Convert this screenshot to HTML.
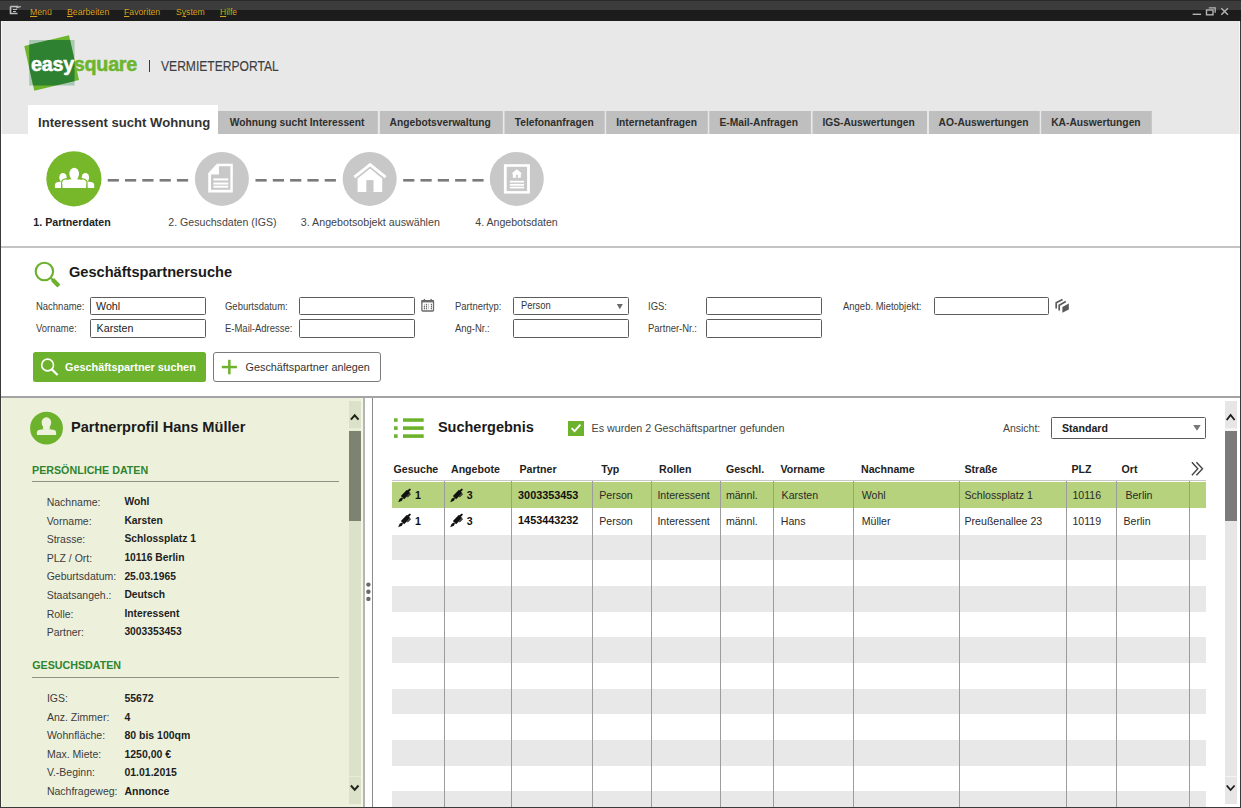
<!DOCTYPE html>
<html><head><meta charset="utf-8">
<style>
*{margin:0;padding:0;box-sizing:border-box}
html,body{width:1241px;height:808px;overflow:hidden}
body{position:relative;background:#e8e8e8;font-family:"Liberation Sans",sans-serif;color:#222}
.a{position:absolute}
.t{position:absolute;white-space:nowrap;line-height:1}
.inp{position:absolute;background:#fff;border:1.5px solid #5c5c5c;border-radius:1.5px}
</style></head><body>
<div class="a" style="left:0px;top:0px;width:1241px;height:10px;background:#3c3c3c;border-top:1px solid #2a2a2a"></div>
<div class="a" style="left:0px;top:10px;width:1241px;height:11px;background:#1c1c1c;"></div>
<div class="a" style="left:0px;top:21px;width:1px;height:787px;background:#3a3a3a;"></div>
<div class="a" style="left:1240px;top:21px;width:1px;height:787px;background:#3a3a3a;"></div>
<div class="a" style="left:1px;top:21px;width:1px;height:786px;background:#f6f6f6;"></div>
<div class="a" style="left:1239px;top:21px;width:1px;height:786px;background:#f6f6f6;"></div>
<div class="a" style="left:1px;top:134px;width:1239px;height:262px;background:#fff;"></div>
<div class="a" style="left:1px;top:246px;width:1239px;height:2px;background:#c4c4c4;"></div>
<div class="a" style="left:1px;top:396.2px;width:1239px;height:1.7px;background:#a4a4a4;"></div>
<div class="a" style="left:2px;top:398px;width:361px;height:409px;background:#edf1dc;"></div>
<div class="a" style="left:363px;top:398px;width:2px;height:409px;background:#b5b5b5;"></div>
<div class="a" style="left:365px;top:398px;width:7px;height:409px;background:#fff;"></div>
<div class="a" style="left:372px;top:398px;width:1px;height:409px;background:#8a8a8a;"></div>
<div class="a" style="left:373px;top:398px;width:867px;height:409px;background:#fff;"></div>
<div class="a" style="left:0px;top:807px;width:1241px;height:1px;background:#3a3a3a;"></div>
<svg class="a" style="left:9px;top:4px" width="14" height="12" viewBox="0 0 14 12"><path d="M1.5 2.5h8M1.5 2.5v7h7" stroke="#bdbdbd" stroke-width="1.6" fill="none"/><path d="M4 5.5h4M4 7.5h3M7 4l5-1.5" stroke="#bdbdbd" stroke-width="1.2" fill="none"/></svg>
<div class="t" style="left:29.50px;top:7.47px;font-size:9.6px;color:#d8a21c;transform-origin:0 0;transform:scaleX(0.9048);"><u>M</u>enü</div>
<div class="t" style="left:66.50px;top:7.47px;font-size:9.6px;color:#d8a21c;transform-origin:0 0;transform:scaleX(0.91);"><u>B</u>earbeiten</div>
<div class="t" style="left:124.00px;top:7.47px;font-size:9.6px;color:#d8a21c;transform-origin:0 0;transform:scaleX(0.9048);"><u>F</u>avoriten</div>
<div class="t" style="left:175.50px;top:7.47px;font-size:9.6px;color:#d8a21c;transform-origin:0 0;transform:scaleX(0.8996000000000001);">S<u>y</u>stem</div>
<div class="t" style="left:219.50px;top:7.47px;font-size:9.6px;color:#d8a21c;transform-origin:0 0;transform:scaleX(0.884);"><u>H</u>ilfe</div>
<svg class="a" style="left:1190px;top:5px" width="42" height="12" viewBox="0 0 42 12"><path d="M2.6 9.3h8.5" stroke="#b4b4b4" stroke-width="1.4"/><rect x="16.5" y="5" width="6.5" height="4.8" stroke="#b4b4b4" stroke-width="1.4" fill="none"/><path d="M18.8 2.8h6.4v5" stroke="#b4b4b4" stroke-width="1.3" fill="none"/><path d="M31.3 3.2l6.6 6.6M37.9 3.2l-6.6 6.6" stroke="#b4b4b4" stroke-width="1.4"/></svg>
<svg class="a" style="left:20px;top:30px" width="70" height="66" viewBox="0 0 70 66">
 <defs><clipPath id="gc"><rect x="9.2" y="10" width="45.4" height="45.5"/></clipPath></defs>
 <rect x="9.2" y="10" width="45.4" height="45.5" fill="#a9c8b4"/>
 <polygon points="4.3,16 49,5.2 59,50 14.3,60.7" fill="#6db52c"/>
 <polygon points="4.3,16 49,5.2 59,50 14.3,60.7" fill="#2f8132" clip-path="url(#gc)"/>
</svg>
<div class="t" style="left:30.50px;top:54.05px;font-size:20.5px;color:#222;font-weight:bold;transform-origin:0 0;transform:scaleX(0.965);letter-spacing:-0.3px;"><span style="color:#fff;-webkit-text-stroke:0.5px #fff">easy</span><span style="color:#6db52c;-webkit-text-stroke:0.5px #6db52c">square</span></div>
<div class="a" style="left:149.2px;top:59.5px;width:1.3px;height:12px;background:#3a3a3a;"></div>
<div class="t" style="left:160.80px;top:58.20px;font-size:15px;color:#3e3e3e;transform-origin:0 0;transform:scaleX(0.806);-webkit-text-stroke:0.15px #3e3e3e;">VERMIETERPORTAL</div>
<div class="a" style="left:27.5px;top:105px;width:190.5px;height:29px;background:#fff;"></div>
<div class="t" style="left:38.00px;top:115.51px;font-size:13.1px;color:#333;font-weight:bold;">Interessent sucht Wohnung</div>
<svg class="a" style="left:0;top:100px" width="1241" height="40" viewBox="0 100 1241 40"><rect x="218" y="111" width="159.8" height="23" fill="#bfbfbf"/><rect x="379.9" y="111" width="122.9" height="23" fill="#bfbfbf"/><rect x="504.5" y="111" width="100.2" height="23" fill="#bfbfbf"/><rect x="606.1" y="111" width="101.7" height="23" fill="#bfbfbf"/><rect x="709.3" y="111" width="101.6" height="23" fill="#bfbfbf"/><rect x="812.6" y="111" width="114.4" height="23" fill="#bfbfbf"/><rect x="929" y="111" width="110.7" height="23" fill="#bfbfbf"/><rect x="1041.2" y="111" width="110.6" height="23" fill="#bfbfbf"/></svg>
<div class="t" style="left:229.70px;top:117.62px;font-size:10.25px;color:#2e2e2e;font-weight:bold;">Wohnung sucht Interessent</div>
<div class="t" style="left:389.50px;top:117.62px;font-size:10.25px;color:#2e2e2e;font-weight:bold;">Angebotsverwaltung</div>
<div class="t" style="left:514.70px;top:117.62px;font-size:10.25px;color:#2e2e2e;font-weight:bold;">Telefonanfragen</div>
<div class="t" style="left:616.20px;top:117.62px;font-size:10.25px;color:#2e2e2e;font-weight:bold;">Internetanfragen</div>
<div class="t" style="left:719.40px;top:117.62px;font-size:10.25px;color:#2e2e2e;font-weight:bold;">E-Mail-Anfragen</div>
<div class="t" style="left:822.40px;top:117.62px;font-size:10.25px;color:#2e2e2e;font-weight:bold;">IGS-Auswertungen</div>
<div class="t" style="left:938.60px;top:117.62px;font-size:10.25px;color:#2e2e2e;font-weight:bold;">AO-Auswertungen</div>
<div class="t" style="left:1051.20px;top:117.62px;font-size:10.25px;color:#2e2e2e;font-weight:bold;">KA-Auswertungen</div>
<svg class="a" style="left:0;top:140px" width="600" height="80" viewBox="0 140 600 80">
 <circle cx="73.9" cy="178.8" r="27.6" fill="#76b82a"/>
 <circle cx="221.9" cy="178.9" r="27" fill="#c8c8c8"/>
 <circle cx="369.7" cy="178.9" r="27" fill="#c8c8c8"/>
 <circle cx="516.8" cy="178.9" r="27" fill="#c8c8c8"/>
 <g fill="#7a7a7a">
<rect x="107.7" y="179" width="11.2" height="2.6"/><rect x="125.0" y="179" width="11.2" height="2.6"/><rect x="142.3" y="179" width="11.2" height="2.6"/><rect x="159.6" y="179" width="11.2" height="2.6"/><rect x="176.9" y="179" width="11.2" height="2.6"/><rect x="255.5" y="179" width="11.2" height="2.6"/><rect x="272.8" y="179" width="11.2" height="2.6"/><rect x="290.1" y="179" width="11.2" height="2.6"/><rect x="307.4" y="179" width="11.2" height="2.6"/><rect x="324.7" y="179" width="11.2" height="2.6"/><rect x="403.2" y="179" width="11.2" height="2.6"/><rect x="420.5" y="179" width="11.2" height="2.6"/><rect x="437.8" y="179" width="11.2" height="2.6"/><rect x="455.1" y="179" width="11.2" height="2.6"/><rect x="472.4" y="179" width="11.2" height="2.6"/></g>
 <g fill="#fff">
  <ellipse cx="74.2" cy="174" rx="4.8" ry="6.3"/>
  <path d="M62.3 188 v-5 q0-2.8 3.5-3.2 l5.5-0.5 h6 l5.5 0.5 q3.5 0.4 3.5 3.2 v5z"/>
  <ellipse cx="63" cy="177.6" rx="3.7" ry="4.7"/>
  <path d="M54.9 188 v-3 q0-2.5 3-3 l4.5-0.5 h5 l-3 1.5 q-2.5 1.3-2.5 3.5 v1.5z"/>
  <ellipse cx="85.4" cy="177.6" rx="3.7" ry="4.7"/>
  <path d="M94.2 188 v-3 q0-2.5-3-3 l-4.5-0.5 h-5 l3 1.5 q2.5 1.3 2.5 3.5 v1.5z"/>
 </g>
 <g stroke="#76b82a" stroke-width="1.2" fill="none">
  <path d="M61.6 188 v-5.2 q0-3.4 4.2-3.9 l4.5-0.6"/><path d="M87 188 v-5.2 q0-3.4-4.2-3.9 l-4.5-0.6"/>
 </g>
 <g transform="translate(194,151)">
  <polygon points="14.2,22.2 22.9,12.8 38.8,12.8 38.8,41.6 14.2,41.6" fill="#fff"/>
  <polygon points="25,15.2 36.4,15.2 36.4,38.8 17,38.8 17,23.6 25,23.6" fill="#c8c8c8"/>
  <g fill="#fff"><rect x="19.4" y="27.4" width="14.9" height="2.1"/><rect x="19.4" y="31.5" width="14.9" height="2.1"/><rect x="19.4" y="34.7" width="14.9" height="2"/></g>
 </g>
 <g transform="translate(342,151)">
  <polyline points="12.3,26.2 28.1,13.6 43.6,26.2" stroke="#fff" stroke-width="2.8" fill="none"/>
  <polygon points="15.6,27.6 28.1,17.6 40.2,27.6 40.2,40.9 15.6,40.9" fill="#fff"/>
  <rect x="24.3" y="29.1" width="7.2" height="11.8" fill="#c8c8c8"/>
 </g>
 <g transform="translate(489,151)">
  <rect x="14.9" y="13.2" width="26" height="29.4" fill="#fff"/>
  <rect x="17.7" y="15.8" width="20.4" height="24.3" fill="#c8c8c8"/>
  <polygon points="22.6,22.6 27.8,18.3 33,22.6 31.8,22.6 31.8,26.7 23.8,26.7 23.8,22.6" fill="#fff"/>
  <rect x="27" y="23.8" width="1.8" height="2.9" fill="#c8c8c8"/>
  <g fill="#fff"><rect x="20.8" y="29.8" width="14.2" height="1.7"/><rect x="20.8" y="32.9" width="14.2" height="1.8"/><rect x="20.8" y="35.7" width="14.2" height="1.7"/></g>
 </g>
</svg>
<div class="t" style="left:33.30px;top:216.88px;font-size:10.65px;color:#222;font-weight:bold;">1. Partnerdaten</div>
<div class="t" style="left:168.30px;top:216.93px;font-size:10.6px;color:#444;">2. Gesuchsdaten (IGS)</div>
<div class="t" style="left:300.80px;top:216.84px;font-size:10.7px;color:#444;">3. Angebotsobjekt auswählen</div>
<div class="t" style="left:475.30px;top:216.93px;font-size:10.6px;color:#444;">4. Angebotsdaten</div>
<svg class="a" style="left:30px;top:256px" width="34" height="34" viewBox="30 256 34 34">
 <circle cx="44.4" cy="271.5" r="8.7" stroke="#6cb02c" stroke-width="2.1" fill="none"/>
 <path d="M50.6 277.7 L58.8 285.9" stroke="#6cb02c" stroke-width="2"/>
 <path d="M52.5 279.6 L58.8 285.9" stroke="#6cb02c" stroke-width="4.3"/>
</svg>
<div class="t" style="left:69.00px;top:264.84px;font-size:14.6px;color:#1a1a1a;font-weight:bold;">Geschäftspartnersuche</div>
<div class="t" style="left:35.70px;top:301.57px;font-size:10.2px;color:#3c3c3c;transform-origin:0 0;transform:scaleX(0.93);">Nachname:</div>
<div class="t" style="left:35.70px;top:323.57px;font-size:10.2px;color:#3c3c3c;transform-origin:0 0;transform:scaleX(0.93);">Vorname:</div>
<div class="inp" style="left:90px;top:296.5px;width:115.7px;height:18.5px"></div>
<div class="inp" style="left:90px;top:319px;width:115.7px;height:18.5px"></div>
<div class="t" style="left:96.00px;top:300.94px;font-size:10.7px;color:#222;">Wohl</div>
<div class="t" style="left:96.60px;top:322.54px;font-size:10.7px;color:#222;">Karsten</div>
<div class="t" style="left:224.60px;top:301.57px;font-size:10.2px;color:#3c3c3c;transform-origin:0 0;transform:scaleX(0.93);">Geburtsdatum:</div>
<div class="t" style="left:224.60px;top:323.57px;font-size:10.2px;color:#3c3c3c;transform-origin:0 0;transform:scaleX(0.93);">E-Mail-Adresse:</div>
<div class="inp" style="left:299.3px;top:296.5px;width:115.5px;height:18.5px"></div>
<div class="inp" style="left:299.3px;top:319px;width:115.5px;height:18.5px"></div>
<svg class="a" style="left:420px;top:298px" width="16" height="15" viewBox="420 298 16 15">
 <rect x="421.9" y="300.7" width="11.6" height="10.3" rx="0.8" stroke="#6a6a6a" stroke-width="1.3" fill="#fff"/>
 <rect x="421.4" y="300.1" width="12.6" height="2.3" fill="#6a6a6a"/>
 <rect x="423.7" y="298.9" width="1.4" height="2" fill="#6a6a6a"/><rect x="430.4" y="298.9" width="1.4" height="2" fill="#6a6a6a"/>
 <g fill="#b8b8b8"><rect x="424" y="303.8" width="0.8" height="5.6"/><rect x="426.1" y="303.8" width="0.8" height="5.6"/><rect x="428.3" y="303.8" width="0.8" height="5.6"/><rect x="431" y="303.8" width="0.8" height="5.6"/></g>
 <g fill="#666"><rect x="425.9" y="303.9" width="1.2" height="1.2"/><rect x="430.8" y="303.9" width="1.2" height="1.2"/>
 <rect x="423.8" y="306" width="1.2" height="1.2"/><rect x="425.9" y="306" width="1.2" height="1.2"/><rect x="430.8" y="306" width="1.2" height="1.2"/>
 <rect x="423.8" y="308" width="1.2" height="1.2"/><rect x="425.9" y="308" width="1.2" height="1.2"/><rect x="430.8" y="308" width="1.2" height="1.2"/></g>
</svg>
<div class="t" style="left:455.40px;top:301.57px;font-size:10.2px;color:#3c3c3c;transform-origin:0 0;transform:scaleX(0.93);">Partnertyp:</div>
<div class="t" style="left:455.40px;top:323.57px;font-size:10.2px;color:#3c3c3c;transform-origin:0 0;transform:scaleX(0.93);">Ang-Nr.:</div>
<div class="inp" style="left:513px;top:296.5px;width:115.5px;height:18.5px"></div>
<div class="inp" style="left:513px;top:319px;width:115.5px;height:18.5px"></div>
<div class="t" style="left:521.20px;top:301.05px;font-size:10.1px;color:#333;transform-origin:0 0;transform:scaleX(0.93);">Person</div>
<svg class="a" style="left:615px;top:303px" width="10" height="8" viewBox="0 0 10 8"><polygon points="1.8,1 7.8,1 4.8,6.2" fill="#6a6a6a"/></svg>
<div class="t" style="left:647.70px;top:301.57px;font-size:10.2px;color:#3c3c3c;transform-origin:0 0;transform:scaleX(0.93);">IGS:</div>
<div class="t" style="left:647.70px;top:323.57px;font-size:10.2px;color:#3c3c3c;transform-origin:0 0;transform:scaleX(0.93);">Partner-Nr.:</div>
<div class="inp" style="left:706.3px;top:296.5px;width:115.6px;height:18.5px"></div>
<div class="inp" style="left:706.3px;top:319px;width:115.6px;height:18.5px"></div>
<div class="t" style="left:843.00px;top:301.57px;font-size:10.2px;color:#3c3c3c;transform-origin:0 0;transform:scaleX(0.93);">Angeb. Mietobjekt:</div>
<div class="inp" style="left:933.7px;top:296.6px;width:115.2px;height:18px"></div>
<svg class="a" style="left:1050px;top:294px" width="24" height="24" viewBox="0 0 24 24">
 <polyline points="6.2,14.5 6.2,8.8 12.6,5.4" stroke="#5a5a5a" stroke-width="1.7" fill="none"/>
 <polyline points="9.2,16.6 9.2,11.2 15.8,7.6" stroke="#5a5a5a" stroke-width="1.7" fill="none"/>
 <polygon points="12.4,12.9 18.8,9.6 18.8,15.4 12.4,18.8" fill="#5a5a5a"/>
</svg>
<div class="a" style="left:33.4px;top:352px;width:173px;height:29.6px;background:#6db22c;border-radius:2.5px;"></div>
<svg class="a" style="left:38px;top:355px" width="24" height="24" viewBox="38 355 24 24">
 <circle cx="47.6" cy="365" r="5.9" stroke="#fff" stroke-width="1.6" fill="none"/>
 <path d="M51.8 369.4 L57.6 375" stroke="#fff" stroke-width="2.2"/>
</svg>
<div class="t" style="left:65.00px;top:361.92px;font-size:10.85px;color:#fff;font-weight:bold;">Geschäftspartner suchen</div>
<div class="a" style="left:213.4px;top:352px;width:167.4px;height:29.5px;background:#fff;border:1px solid #7a7a7a;border-radius:3px;"></div>
<svg class="a" style="left:220px;top:358px" width="18" height="18" viewBox="220 358 18 18">
 <rect x="221.8" y="365.8" width="15.1" height="2.5" fill="#6db22c"/>
 <rect x="228.1" y="359.8" width="2.5" height="14.5" fill="#6db22c"/>
</svg>
<div class="t" style="left:245.60px;top:361.96px;font-size:10.8px;color:#333;">Geschäftspartner anlegen</div>
<svg class="a" style="left:28px;top:410px" width="38" height="38" viewBox="28 410 38 38">
 <circle cx="46.5" cy="428.2" r="16.4" fill="#6db22c"/>
 <ellipse cx="46.4" cy="422.6" rx="4.8" ry="5.4" fill="#eef2dc"/>
 <path d="M43.2 426.5 h6.4 l0.3 2.6 h-7z" fill="#eef2dc"/>
 <path d="M36.9 435.1 v-2.6 q0-2.4 3.2-2.7 l4.5-0.7 h3.8 l4.5 0.7 q3.2 0.3 3.2 2.7 v2.6z" fill="#eef2dc"/>
</svg>
<div class="t" style="left:71.00px;top:419.54px;font-size:14.6px;color:#1a1a1a;font-weight:bold;">Partnerprofil Hans Müller</div>
<div class="t" style="left:32.00px;top:464.74px;font-size:10.7px;color:#2f852f;font-weight:bold;">PERSÖNLICHE DATEN</div>
<div class="a" style="left:32px;top:480.6px;width:307px;height:1.2px;background:#8f9185;"></div>
<div class="t" style="left:32.20px;top:660.44px;font-size:10.7px;color:#2f852f;font-weight:bold;">GESUCHSDATEN</div>
<div class="a" style="left:32.2px;top:676.6px;width:307px;height:1.2px;background:#8f9185;"></div>
<div class="t" style="left:46.70px;top:497.01px;font-size:10.5px;color:#3c3c3c;">Nachname:</div>
<div class="t" style="left:124.40px;top:497.18px;font-size:10.3px;color:#1e1e1e;font-weight:bold;">Wohl</div>
<div class="t" style="left:46.70px;top:515.61px;font-size:10.5px;color:#3c3c3c;">Vorname:</div>
<div class="t" style="left:124.40px;top:515.78px;font-size:10.3px;color:#1e1e1e;font-weight:bold;">Karsten</div>
<div class="t" style="left:46.70px;top:534.21px;font-size:10.5px;color:#3c3c3c;">Strasse:</div>
<div class="t" style="left:124.40px;top:534.38px;font-size:10.3px;color:#1e1e1e;font-weight:bold;">Schlossplatz 1</div>
<div class="t" style="left:46.70px;top:552.81px;font-size:10.5px;color:#3c3c3c;">PLZ / Ort:</div>
<div class="t" style="left:124.40px;top:552.98px;font-size:10.3px;color:#1e1e1e;font-weight:bold;">10116 Berlin</div>
<div class="t" style="left:46.70px;top:571.41px;font-size:10.5px;color:#3c3c3c;">Geburtsdatum:</div>
<div class="t" style="left:124.40px;top:571.58px;font-size:10.3px;color:#1e1e1e;font-weight:bold;">25.03.1965</div>
<div class="t" style="left:46.70px;top:590.01px;font-size:10.5px;color:#3c3c3c;">Staatsangeh.:</div>
<div class="t" style="left:124.40px;top:590.18px;font-size:10.3px;color:#1e1e1e;font-weight:bold;">Deutsch</div>
<div class="t" style="left:46.70px;top:608.61px;font-size:10.5px;color:#3c3c3c;">Rolle:</div>
<div class="t" style="left:124.40px;top:608.78px;font-size:10.3px;color:#1e1e1e;font-weight:bold;">Interessent</div>
<div class="t" style="left:46.70px;top:627.21px;font-size:10.5px;color:#3c3c3c;">Partner:</div>
<div class="t" style="left:124.40px;top:627.38px;font-size:10.3px;color:#1e1e1e;font-weight:bold;">3003353453</div>
<div class="t" style="left:46.90px;top:693.01px;font-size:10.5px;color:#3c3c3c;">IGS:</div>
<div class="t" style="left:124.40px;top:693.01px;font-size:10.5px;color:#1e1e1e;font-weight:bold;">55672</div>
<div class="t" style="left:46.90px;top:711.59px;font-size:10.5px;color:#3c3c3c;">Anz. Zimmer:</div>
<div class="t" style="left:124.40px;top:711.59px;font-size:10.5px;color:#1e1e1e;font-weight:bold;">4</div>
<div class="t" style="left:46.90px;top:730.17px;font-size:10.5px;color:#3c3c3c;">Wohnfläche:</div>
<div class="t" style="left:124.40px;top:730.17px;font-size:10.5px;color:#1e1e1e;font-weight:bold;">80 bis 100qm</div>
<div class="t" style="left:46.90px;top:748.75px;font-size:10.5px;color:#3c3c3c;">Max. Miete:</div>
<div class="t" style="left:124.40px;top:748.75px;font-size:10.5px;color:#1e1e1e;font-weight:bold;">1250,00 €</div>
<div class="t" style="left:46.90px;top:767.33px;font-size:10.5px;color:#3c3c3c;">V.-Beginn:</div>
<div class="t" style="left:124.40px;top:767.33px;font-size:10.5px;color:#1e1e1e;font-weight:bold;">01.01.2015</div>
<div class="t" style="left:46.90px;top:785.91px;font-size:10.5px;color:#3c3c3c;">Nachfrageweg:</div>
<div class="t" style="left:124.40px;top:785.91px;font-size:10.5px;color:#1e1e1e;font-weight:bold;">Annonce</div>
<div class="a" style="left:348.5px;top:400.5px;width:12.5px;height:403px;background:#dbe2c9;"></div>
<div class="a" style="left:348.5px;top:428px;width:12.5px;height:2.8px;background:#e8eed6;"></div>
<div class="a" style="left:348.5px;top:775.5px;width:12.5px;height:1.2px;background:#e8eed6;"></div>
<div class="a" style="left:361px;top:398px;width:2px;height:409px;background:#f2f6e2;"></div>
<div class="a" style="left:348.5px;top:430.8px;width:12.3px;height:90px;background:#7d8370;"></div>
<svg class="a" style="left:348px;top:410px" width="14" height="14" viewBox="348 410 14 14"><polyline points="350.9,419.6 354.7,415.3 358.5,419.6" stroke="#1e2218" stroke-width="2" fill="none"/></svg>
<svg class="a" style="left:348px;top:781px" width="14" height="14" viewBox="348 781 14 14"><polyline points="350.9,785.5 354.7,789.8 358.5,785.5" stroke="#1e2218" stroke-width="2" fill="none"/></svg>
<svg class="a" style="left:365px;top:581px" width="7" height="22" viewBox="365 581 7 22"><g fill="#6a6a6a"><circle cx="368.4" cy="584.6" r="2.2"/><circle cx="368.4" cy="591.7" r="2.2"/><circle cx="368.4" cy="598.9" r="2.2"/></g></svg>
<svg class="a" style="left:390px;top:414px" width="36" height="28" viewBox="390 414 36 28"><g fill="#6db22c">
<rect x="394" y="418.3" width="3.6" height="3.5"/><rect x="403" y="418.3" width="20.7" height="3.5"/>
<rect x="394" y="426.3" width="3.6" height="3.6"/><rect x="403" y="426.3" width="20.7" height="3.6"/>
<rect x="394" y="434.3" width="3.6" height="3.6"/><rect x="403" y="434.3" width="20.7" height="3.6"/></g></svg>
<div class="t" style="left:437.90px;top:420.43px;font-size:14.5px;color:#1a1a1a;font-weight:bold;">Suchergebnis</div>
<div class="a" style="left:568.1px;top:420.6px;width:15.6px;height:15.2px;background:#6db22c;"></div>
<svg class="a" style="left:568px;top:420px" width="16" height="16" viewBox="0 0 16 16"><polyline points="3.6,8.2 6.6,11.2 12.4,4.6" stroke="#fff" stroke-width="1.8" fill="none"/></svg>
<div class="t" style="left:591.50px;top:422.60px;font-size:10.75px;color:#444;">Es wurden 2 Geschäftspartner gefunden</div>
<div class="t" style="left:1002.90px;top:422.91px;font-size:10.5px;color:#444;">Ansicht:</div>
<div class="inp" style="left:1050.8px;top:417.2px;width:155.6px;height:21.6px"></div>
<div class="t" style="left:1062.00px;top:423.03px;font-size:10.6px;color:#222;font-weight:bold;">Standard</div>
<svg class="a" style="left:1191px;top:423px" width="12" height="10" viewBox="1191 423 12 10"><polygon points="1193.2,424.9 1200.7,424.9 1197,430.8" fill="#777"/></svg>
<div class="a" style="left:1224.5px;top:400.5px;width:12.3px;height:403px;background:#e6e6e6;"></div>
<div class="a" style="left:1224.5px;top:428.3px;width:12.3px;height:2.6px;background:#f4f4f4;"></div>
<div class="a" style="left:1224.5px;top:775.5px;width:12.3px;height:1.2px;background:#f4f4f4;"></div>
<div class="a" style="left:1224.5px;top:431px;width:12.3px;height:90px;background:#7b7b7b;"></div>
<svg class="a" style="left:1224px;top:410px" width="14" height="14" viewBox="1224 410 14 14"><polyline points="1226.7,420 1230.6,415 1234.6,420" stroke="#1a1a1a" stroke-width="1.8" fill="none"/></svg>
<svg class="a" style="left:1224px;top:781px" width="14" height="14" viewBox="1224 781 14 14"><polyline points="1226.7,785.5 1230.6,790 1234.6,785.5" stroke="#1a1a1a" stroke-width="1.8" fill="none"/></svg>
<div class="t" style="left:393.50px;top:463.53px;font-size:10.6px;color:#222;font-weight:bold;">Gesuche</div>
<div class="t" style="left:451.00px;top:463.53px;font-size:10.6px;color:#222;font-weight:bold;">Angebote</div>
<div class="t" style="left:519.50px;top:463.53px;font-size:10.6px;color:#222;font-weight:bold;">Partner</div>
<div class="t" style="left:601.30px;top:463.53px;font-size:10.6px;color:#222;font-weight:bold;">Typ</div>
<div class="t" style="left:659.10px;top:463.53px;font-size:10.6px;color:#222;font-weight:bold;">Rollen</div>
<div class="t" style="left:725.90px;top:463.53px;font-size:10.6px;color:#222;font-weight:bold;">Geschl.</div>
<div class="t" style="left:780.40px;top:463.53px;font-size:10.6px;color:#222;font-weight:bold;">Vorname</div>
<div class="t" style="left:861.00px;top:463.53px;font-size:10.6px;color:#222;font-weight:bold;">Nachname</div>
<div class="t" style="left:964.50px;top:463.53px;font-size:10.6px;color:#222;font-weight:bold;">Straße</div>
<div class="t" style="left:1071.50px;top:463.53px;font-size:10.6px;color:#222;font-weight:bold;">PLZ</div>
<div class="t" style="left:1121.60px;top:463.53px;font-size:10.6px;color:#222;font-weight:bold;">Ort</div>
<svg class="a" style="left:1188px;top:460px" width="18" height="18" viewBox="1188 460 18 18"><polyline points="1191.9,462.2 1197.8,468.7 1191.9,475.2" stroke="#454545" stroke-width="1.4" fill="none"/><polyline points="1196.4,462.2 1202.5,468.7 1196.4,475.2" stroke="#454545" stroke-width="1.4" fill="none"/></svg>
<div class="a" style="left:392px;top:479.5px;width:814.3px;height:1.6px;background:#c8c8c8;"></div>
<div class="a" style="left:392px;top:482px;width:814.3px;height:26px;background:#b6d27c;"></div>
<div class="a" style="left:392px;top:534.6px;width:814.3px;height:25.7px;background:#e8e8e8;"></div>
<div class="a" style="left:392px;top:585.9px;width:814.3px;height:25.7px;background:#e8e8e8;"></div>
<div class="a" style="left:392px;top:637.2px;width:814.3px;height:25.7px;background:#e8e8e8;"></div>
<div class="a" style="left:392px;top:688.6px;width:814.3px;height:25.7px;background:#e8e8e8;"></div>
<div class="a" style="left:392px;top:739.9px;width:814.3px;height:25.7px;background:#e8e8e8;"></div>
<div class="a" style="left:392px;top:791.2px;width:814.3px;height:15.8px;background:#e8e8e8;"></div>
<div class="a" style="left:443.8px;top:481.2px;width:1.1px;height:326px;background:#9c9c9c;"></div>
<div class="a" style="left:510.8px;top:481.2px;width:1.1px;height:326px;background:#9c9c9c;"></div>
<div class="a" style="left:592.2px;top:481.2px;width:1.1px;height:326px;background:#9c9c9c;"></div>
<div class="a" style="left:651px;top:481.2px;width:1.1px;height:326px;background:#9c9c9c;"></div>
<div class="a" style="left:720.2px;top:481.2px;width:1.1px;height:326px;background:#9c9c9c;"></div>
<div class="a" style="left:773.3px;top:481.2px;width:1.1px;height:326px;background:#9c9c9c;"></div>
<div class="a" style="left:853px;top:481.2px;width:1.1px;height:326px;background:#9c9c9c;"></div>
<div class="a" style="left:959.4px;top:481.2px;width:1.1px;height:326px;background:#9c9c9c;"></div>
<div class="a" style="left:1066.1px;top:481.2px;width:1.1px;height:326px;background:#9c9c9c;"></div>
<div class="a" style="left:1116.1px;top:481.2px;width:1.1px;height:326px;background:#9c9c9c;"></div>
<div class="a" style="left:1188.8px;top:481.2px;width:1.1px;height:326px;background:#9c9c9c;"></div>
<svg class="a" style="left:392px;top:483.7px" width="22" height="22" viewBox="0 0 22 22"><g transform="translate(1.6,0.2) scale(0.92)"><path d="M9.7 14.5 L16.3 7.9" stroke="#111" stroke-width="5"/><path d="M16 7.4 L17.6 5.9" stroke="#111" stroke-width="2.2" stroke-linecap="round"/><path d="M5 19.6 L6.6 15.8 L9 14.4 L10.2 15.6 L9 18 Z" fill="#111"/><path d="M14.9 13.9 L18.5 10.4" stroke="#333" stroke-width="1.3"/></g></svg>
<div class="t" style="left:414.90px;top:490.23px;font-size:10.6px;color:#111;font-weight:bold;">1</div>
<svg class="a" style="left:444px;top:483.7px" width="22" height="22" viewBox="0 0 22 22"><g transform="translate(1.6,0.2) scale(0.92)"><path d="M9.7 14.5 L16.3 7.9" stroke="#111" stroke-width="5"/><path d="M16 7.4 L17.6 5.9" stroke="#111" stroke-width="2.2" stroke-linecap="round"/><path d="M5 19.6 L6.6 15.8 L9 14.4 L10.2 15.6 L9 18 Z" fill="#111"/><path d="M14.9 13.9 L18.5 10.4" stroke="#333" stroke-width="1.3"/></g></svg>
<div class="t" style="left:466.80px;top:490.23px;font-size:10.6px;color:#111;font-weight:bold;">3</div>
<div class="t" style="left:518.10px;top:490.02px;font-size:10.85px;color:#111;font-weight:bold;">3003353453</div>
<div class="t" style="left:599.20px;top:490.23px;font-size:10.6px;color:#2a2a2a;">Person</div>
<div class="t" style="left:657.40px;top:490.23px;font-size:10.6px;color:#2a2a2a;">Interessent</div>
<div class="t" style="left:725.90px;top:490.23px;font-size:10.6px;color:#2a2a2a;">männl.</div>
<div class="t" style="left:781.60px;top:490.23px;font-size:10.6px;color:#2a2a2a;">Karsten</div>
<div class="t" style="left:861.70px;top:490.23px;font-size:10.6px;color:#2a2a2a;">Wohl</div>
<div class="t" style="left:964.50px;top:490.23px;font-size:10.6px;color:#2a2a2a;">Schlossplatz 1</div>
<div class="t" style="left:1072.40px;top:490.23px;font-size:10.6px;color:#2a2a2a;">10116</div>
<div class="t" style="left:1125.40px;top:490.23px;font-size:10.6px;color:#2a2a2a;">Berlin</div>
<svg class="a" style="left:392px;top:509.1px" width="22" height="22" viewBox="0 0 22 22"><g transform="translate(1.6,0.2) scale(0.92)"><path d="M9.7 14.5 L16.3 7.9" stroke="#111" stroke-width="5"/><path d="M16 7.4 L17.6 5.9" stroke="#111" stroke-width="2.2" stroke-linecap="round"/><path d="M5 19.6 L6.6 15.8 L9 14.4 L10.2 15.6 L9 18 Z" fill="#111"/><path d="M14.9 13.9 L18.5 10.4" stroke="#333" stroke-width="1.3"/></g></svg>
<div class="t" style="left:414.90px;top:515.63px;font-size:10.6px;color:#111;font-weight:bold;">1</div>
<svg class="a" style="left:444px;top:509.1px" width="22" height="22" viewBox="0 0 22 22"><g transform="translate(1.6,0.2) scale(0.92)"><path d="M9.7 14.5 L16.3 7.9" stroke="#111" stroke-width="5"/><path d="M16 7.4 L17.6 5.9" stroke="#111" stroke-width="2.2" stroke-linecap="round"/><path d="M5 19.6 L6.6 15.8 L9 14.4 L10.2 15.6 L9 18 Z" fill="#111"/><path d="M14.9 13.9 L18.5 10.4" stroke="#333" stroke-width="1.3"/></g></svg>
<div class="t" style="left:466.80px;top:515.63px;font-size:10.6px;color:#111;font-weight:bold;">3</div>
<div class="t" style="left:518.10px;top:515.42px;font-size:10.85px;color:#111;font-weight:bold;">1453443232</div>
<div class="t" style="left:599.20px;top:515.63px;font-size:10.6px;color:#2a2a2a;">Person</div>
<div class="t" style="left:657.40px;top:515.63px;font-size:10.6px;color:#2a2a2a;">Interessent</div>
<div class="t" style="left:725.90px;top:515.63px;font-size:10.6px;color:#2a2a2a;">männl.</div>
<div class="t" style="left:780.80px;top:515.63px;font-size:10.6px;color:#2a2a2a;">Hans</div>
<div class="t" style="left:861.70px;top:515.63px;font-size:10.6px;color:#2a2a2a;">Müller</div>
<div class="t" style="left:964.50px;top:515.63px;font-size:10.6px;color:#2a2a2a;">Preußenallee 23</div>
<div class="t" style="left:1072.40px;top:515.63px;font-size:10.6px;color:#2a2a2a;">10119</div>
<div class="t" style="left:1123.50px;top:515.63px;font-size:10.6px;color:#2a2a2a;">Berlin</div>
</body></html>
